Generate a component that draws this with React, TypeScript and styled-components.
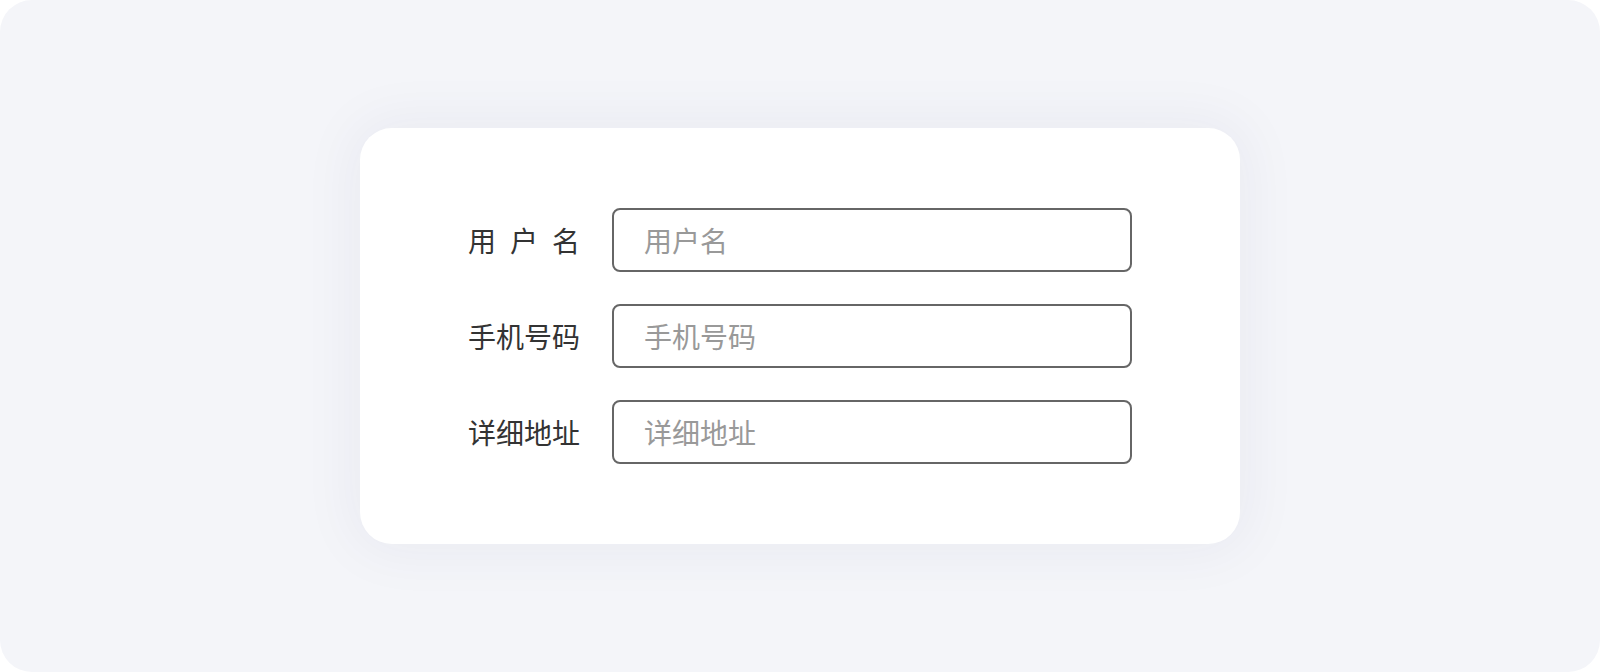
import React from "react";
import styled, { createGlobalStyle } from "styled-components";

const GlobalStyle = createGlobalStyle`
  html, body {
    margin: 0;
    padding: 0;
    background: #ffffff;
  }
  body {
    font-family: "Noto Sans CJK SC", "Noto Sans", sans-serif;
  }
`;

const Stage = styled.div`
  width: 1600px;
  height: 672px;
  box-sizing: border-box;
  background: #f4f5f9;
  border-radius: 32px;
  display: flex;
  align-items: center;
  justify-content: center;
`;

const Card = styled.form`
  width: 880px;
  box-sizing: border-box;
  padding: 80px 108px;
  background: #ffffff;
  border-radius: 32px;
  box-shadow: 0 0 56px 8px rgba(40, 48, 90, 0.05);
  display: flex;
  flex-direction: column;
  gap: 32px;
`;

const Row = styled.label`
  display: flex;
  align-items: center;
  gap: 32px;
`;

const Label = styled.span`
  width: 112px;
  flex-shrink: 0;
  font-size: 28px;
  line-height: 1;
  color: #333333;
  text-align: justify;
  text-align-last: justify;
`;

const Input = styled.input`
  width: 520px;
  height: 64px;
  box-sizing: border-box;
  padding: 0 30px;
  border: 2px solid #666666;
  border-radius: 8px;
  font-family: "Noto Sans CJK SC", "Noto Sans", sans-serif;
  font-size: 28px;
  color: #333333;
  outline: none;
  background: #ffffff;

  &::placeholder {
    color: #999999;
  }
`;

const fields = ["用户名", "手机号码", "详细地址"];

export default function App() {
  return (
    <>
      <GlobalStyle />
      <Stage>
        <Card onSubmit={(e) => e.preventDefault()}>
          {fields.map((name) => (
            <Row key={name}>
              <Label>{name}</Label>
              <Input placeholder={name} />
            </Row>
          ))}
        </Card>
      </Stage>
    </>
  );
}
